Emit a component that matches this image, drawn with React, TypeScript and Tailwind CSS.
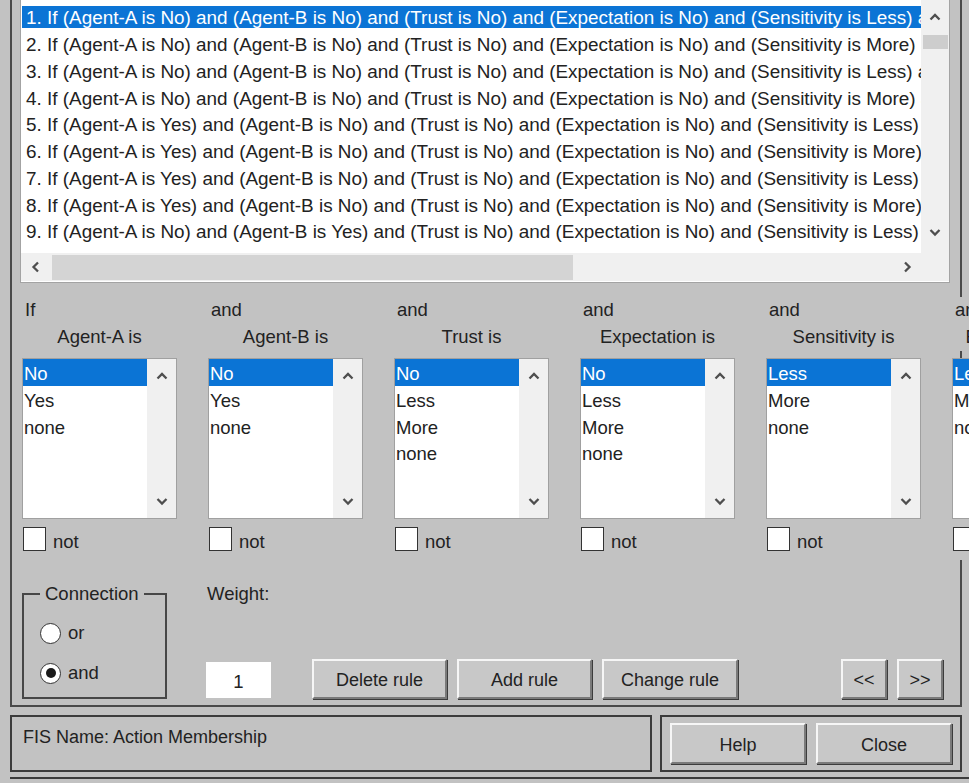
import React from 'react';

type Dir = 'up' | 'down' | 'left' | 'right';

// small scroll arrow glyphs
const Chevron = ({ dir }: { dir: Dir }) => {
  const vert = dir === 'up' || dir === 'down';
  const d = {
    up: 'M1.5 7.5 L6 3 L10.5 7.5',
    down: 'M1.5 2 L6 6.5 L10.5 2',
    left: 'M7 1.5 L2.5 6 L7 10.5',
    right: 'M2 1.5 L6.5 6 L2 10.5',
  }[dir];
  return (
    <svg
      width={vert ? 12 : 9}
      height={vert ? 9 : 12}
      viewBox={vert ? '0 0 12 9' : '0 0 9 12'}
      className="block flex-none"
    >
      <path d={d} fill="none" stroke="#4e4e4e" strokeWidth="2.3" />
    </svg>
  );
};

const rules: string[][] = [
  ['No', 'No', 'No', 'No', 'Less', 'Less'],
  ['No', 'No', 'No', 'No', 'More', 'Less'],
  ['No', 'No', 'No', 'No', 'Less', 'More'],
  ['No', 'No', 'No', 'No', 'More', 'More'],
  ['Yes', 'No', 'No', 'No', 'Less', 'Less'],
  ['Yes', 'No', 'No', 'No', 'More', 'Less'],
  ['Yes', 'No', 'No', 'No', 'Less', 'More'],
  ['Yes', 'No', 'No', 'No', 'More', 'More'],
  ['No', 'Yes', 'No', 'No', 'Less', 'Less'],
];

const ruleText = (r: string[], i: number) =>
  `${i + 1}. If (Agent-A is ${r[0]}) and (Agent-B is ${r[1]}) and (Trust is ${r[2]}) and (Expectation is ${r[3]}) and (Sensitivity is ${r[4]}) and (Effectiveness is ${r[5]})`;

const inputs = [
  { pre: 'If', label: 'Agent-A is', items: ['No', 'Yes', 'none'] },
  { pre: 'and', label: 'Agent-B is', items: ['No', 'Yes', 'none'] },
  { pre: 'and', label: 'Trust is', items: ['No', 'Less', 'More', 'none'] },
  { pre: 'and', label: 'Expectation is', items: ['No', 'Less', 'More', 'none'] },
  { pre: 'and', label: 'Sensitivity is', items: ['Less', 'More', 'none'] },
  { pre: 'and', label: 'Effectiveness is', items: ['Less', 'More', 'none'] },
];

const RaisedButton = ({ label, className }: { label: string; className: string }) => (
  <button
    className={`flex-none flex items-center justify-center pt-[3px] bg-[#c8c8c8] border-2 border-t-[#f6f6f6] border-l-[#f6f6f6] border-b-[#7a7a7a] border-r-[#7a7a7a] shadow-[1px_1px_0_#3c3c3c] text-[18px] text-[#222] ${className}`}
  >
    {label}
  </button>
);

const MemberList = ({ pre, label, items }: { pre: string; label: string; items: string[] }) => (
  <div className="flex-none w-[155px] flex flex-col">
    <div className="bg-[#c2c2c2]">
      <div className="h-[26px] leading-[26px] pl-[3px]">{pre}</div>
      <div className="h-[28px] leading-[28px] text-center whitespace-nowrap">{label}</div>
    </div>
    <div className="mt-[7px] h-[161px] bg-white border border-[#a0a0a0] flex">
      <div className="w-[124px] overflow-hidden">
        {items.map((it, i) => (
          <div
            key={it}
            className={`h-[26.75px] leading-[26.75px] pt-[2px] pl-[1px] whitespace-nowrap ${
              i === 0 ? 'bg-[#0b74d5] text-white' : ''
            }`}
          >
            {it}
          </div>
        ))}
      </div>
      <div className="w-[29px] bg-[#f0f0f0] flex flex-col items-center">
        <div className="h-[12px]" />
        <Chevron dir="up" />
        <div className="flex-1" />
        <Chevron dir="down" />
        <div className="h-[12px]" />
      </div>
    </div>
    <div className="h-[41px] pt-[8px] bg-[#c2c2c2] flex items-start">
      <div className="w-[23px] h-[24px] ml-[1px] bg-white border-[1.5px] border-[#333]" />
      <span className="ml-[7px] leading-[26px] pt-[2px]">not</span>
    </div>
  </div>
);

const Radio = ({ on, label }: { on: boolean; label: string }) => (
  <div className="h-[30px] flex items-center">
    <div className="w-[21px] h-[21px] rounded-full bg-white border-[1.5px] border-[#333] flex items-center justify-center">
      {on && <div className="w-[10px] h-[10px] rounded-full bg-[#1a1a1a]" />}
    </div>
    <span className="ml-[7px]">{label}</span>
  </div>
);

export default function App() {
  return (
    <div className="w-[969px] h-[783px] overflow-hidden bg-[#c2c2c2] font-['Liberation_Sans',Arial,sans-serif] text-[18.5px] text-[#222]">
      {/* rule editor frame */}
      <div className="ml-[10px] w-[952px] h-[707px] border-x-2 border-b-2 border-[#4a4a4a]">
        {/* rule list */}
        <div className="ml-[8px] w-[930px] h-[283px] bg-white border-x border-b border-[#a3a3a3] flex flex-col">
          <div className="flex h-[253px]">
            <div className="w-[900px] overflow-hidden pt-[4px] text-[18.9px]">
              {rules.map((r, i) => (
                <div key={i} className="h-[26.75px] flex items-center">
                  <div
                    className={`h-[22px] w-full ml-[1px] pl-[4px] pt-[1px] leading-[22px] whitespace-nowrap ${
                      i === 0 ? 'bg-[#0b74d5] text-white' : ''
                    }`}
                  >
                    {ruleText(r, i)}
                  </div>
                </div>
              ))}
            </div>
            <div className="w-[28px] bg-[#f0f0f0] flex flex-col items-center">
              <div className="h-[12px]" />
              <Chevron dir="up" />
              <div className="mt-[14px] w-[25px] h-[14px] bg-[#cdcdcd]" />
              <div className="flex-1" />
              <Chevron dir="down" />
              <div className="h-[16px]" />
            </div>
          </div>
          <div className="h-[28px] bg-[#f0f0f0] flex items-center">
            <div className="ml-[10px]">
              <Chevron dir="left" />
            </div>
            <div className="ml-[12px] w-[521px] h-[25px] bg-[#d4d4d4]" />
            <div className="flex-1" />
            <Chevron dir="right" />
            <div className="w-[37px]" />
          </div>
        </div>

        {/* antecedent selectors */}
        <div className="mt-[14px] pl-[10px] flex gap-[31px]">
          {inputs.map((c) => (
            <MemberList key={c.label} {...c} />
          ))}
        </div>

        {/* connection, weight and rule actions */}
        <div className="mt-[24px] pl-[10px] h-[116px] flex items-end">
          <fieldset className="self-start w-[145px] h-[115px] border-2 border-[#474747]">
            <legend className="ml-[16px] px-[5px] leading-[20px]">Connection</legend>
            <div className="pl-[16px] mt-[14px] flex flex-col gap-[10px]">
              <Radio on={false} label="or" />
              <Radio on label="and" />
            </div>
          </fieldset>
          <div className="ml-[39px] h-[116px] flex flex-col justify-between">
            <div className="leading-[20px] pl-[1px]">Weight:</div>
            <div className="mb-[2px] w-[65px] h-[36px] pt-[3px] bg-white flex items-center justify-center">1</div>
          </div>
          <RaisedButton label="Delete rule" className="ml-[41px] mb-[1px] w-[135px] h-[40px]" />
          <RaisedButton label="Add rule" className="ml-[10px] mb-[1px] w-[135px] h-[40px]" />
          <RaisedButton label="Change rule" className="ml-[10px] mb-[1px] w-[136px] h-[40px]" />
          <RaisedButton label="<<" className="ml-[103px] mb-[1px] w-[46px] h-[40px] text-[15px]" />
          <RaisedButton label=">>" className="ml-[10px] mb-[1px] w-[46px] h-[40px] text-[15px]" />
        </div>
      </div>

      {/* status and help bar */}
      <div className="mt-[8px] ml-[10px] flex">
        <div className="w-[642px] h-[57px] border-2 border-[#3c3c3c] pl-[11px] pt-[10px] leading-[20px] text-[18px]">
          FIS Name: Action Membership
        </div>
        <div className="ml-[8px] w-[302px] h-[57px] border-2 border-[#3c3c3c] pl-[8px] pt-[6px] flex">
          <RaisedButton label="Help" className="w-[136px] h-[41px]" />
          <RaisedButton label="Close" className="ml-[10px] w-[136px] h-[41px]" />
        </div>
      </div>
      <div className="mt-[5px] ml-[10px] border-t-2 border-[#3c3c3c]" />
    </div>
  );
}
